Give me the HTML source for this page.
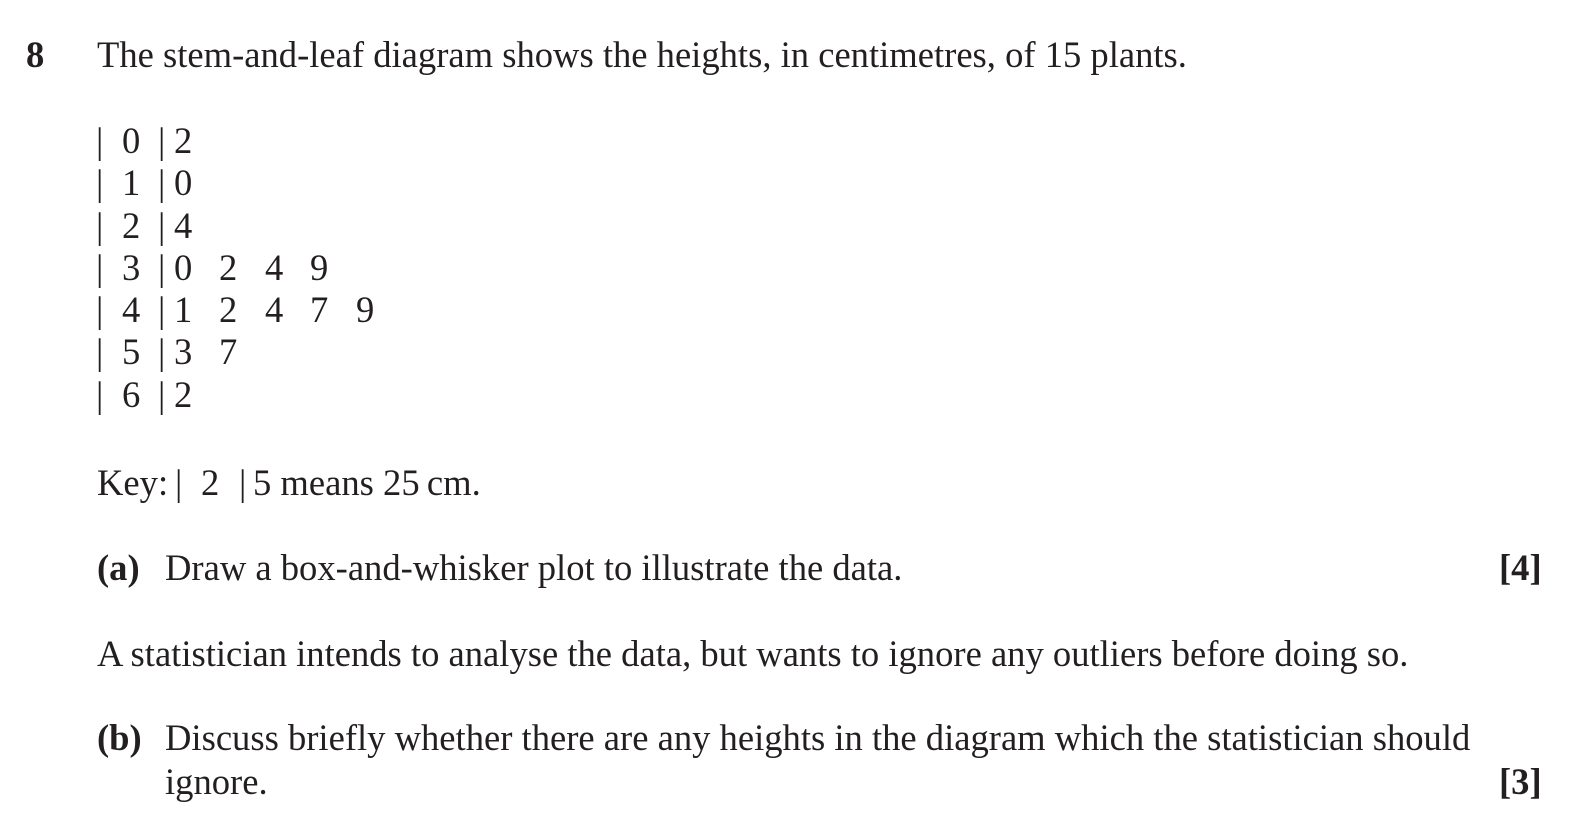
<!DOCTYPE html>
<html><head><meta charset="utf-8"><style>
html,body{margin:0;overflow:hidden}
body{background:#fff;width:1582px;height:834px;position:relative;font-family:"Liberation Serif",serif;font-size:36.6px;color:#231f20}
.t{position:absolute;line-height:40px;white-space:nowrap}
b{font-weight:bold}
</style></head><body>
<div class="t" style="left:26px;top:35px"><b>8</b></div>
<div class="t" style="left:97px;top:35px">The stem-and-leaf diagram shows the heights, in centimetres, of 15 plants.</div>

<div class="t" style="left:96px;top:121px">|</div><div class="t" style="left:122px;top:121px">0</div><div class="t" style="left:158px;top:121px">|</div><div class="t" style="left:174px;top:121px">2</div>
<div class="t" style="left:96px;top:163px">|</div><div class="t" style="left:122px;top:163px">1</div><div class="t" style="left:158px;top:163px">|</div><div class="t" style="left:174px;top:163px">0</div>
<div class="t" style="left:96px;top:206px">|</div><div class="t" style="left:122px;top:206px">2</div><div class="t" style="left:158px;top:206px">|</div><div class="t" style="left:174px;top:206px">4</div>
<div class="t" style="left:96px;top:248px">|</div><div class="t" style="left:122px;top:248px">3</div><div class="t" style="left:158px;top:248px">|</div><div class="t" style="left:174px;top:248px">0</div><div class="t" style="left:219px;top:248px">2</div><div class="t" style="left:265px;top:248px">4</div><div class="t" style="left:310px;top:248px">9</div>
<div class="t" style="left:96px;top:290px">|</div><div class="t" style="left:122px;top:290px">4</div><div class="t" style="left:158px;top:290px">|</div><div class="t" style="left:174px;top:290px">1</div><div class="t" style="left:219px;top:290px">2</div><div class="t" style="left:265px;top:290px">4</div><div class="t" style="left:310px;top:290px">7</div><div class="t" style="left:356px;top:290px">9</div>
<div class="t" style="left:96px;top:332px">|</div><div class="t" style="left:122px;top:332px">5</div><div class="t" style="left:158px;top:332px">|</div><div class="t" style="left:174px;top:332px">3</div><div class="t" style="left:219px;top:332px">7</div>
<div class="t" style="left:96px;top:375px">|</div><div class="t" style="left:122px;top:375px">6</div><div class="t" style="left:158px;top:375px">|</div><div class="t" style="left:174px;top:375px">2</div>

<div class="t" style="left:97px;top:463px">Key:</div><div class="t" style="left:175px;top:463px">|</div><div class="t" style="left:201px;top:463px">2</div><div class="t" style="left:239px;top:463px">|</div><div class="t" style="left:253px;top:463px">5 means 25&#8201;cm.</div>

<div class="t" style="left:97px;top:548px"><b>(a)</b></div><div class="t" style="left:165px;top:548px">Draw a box-and-whisker plot to illustrate the data.</div>
<div class="t" style="left:1499px;top:548px"><b>[4]</b></div>
<div class="t" style="left:97px;top:634px">A statistician intends to analyse the data, but wants to ignore any outliers before doing so.</div>
<div class="t" style="left:97px;top:718px"><b>(b)</b></div><div class="t" style="left:165px;top:718px">Discuss briefly whether there are any heights in the diagram which the statistician should</div>
<div class="t" style="left:165px;top:762px">ignore.</div>
<div class="t" style="left:1499px;top:762px"><b>[3]</b></div>
</body></html>
